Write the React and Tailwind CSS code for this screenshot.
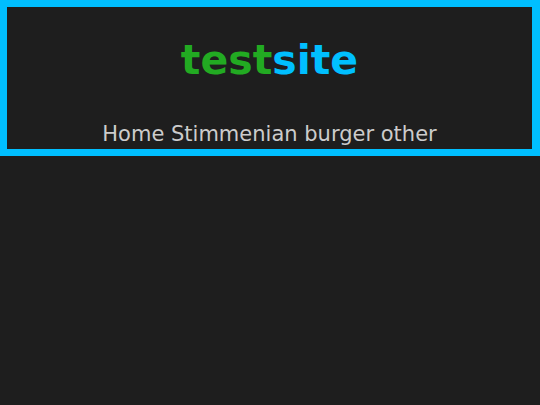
export default function App() {
  return (
    <div className="min-h-[405px] bg-[#1e1e1e]" style={{ fontFamily: '"DejaVu Sans", Verdana, sans-serif' }}>
      <header className="border-[7px] border-r-8 border-[#00bfff] bg-[#1e1e1e] text-center">
        <h1 className="pt-[29px] text-[41px] font-bold leading-[48px]">
          <span className="text-[#22aa22]">test</span>
          <span className="text-[#00bfff]">site</span>
        </h1>
        <nav className="pt-[38px] pb-[2px] text-[21px] leading-[25px] text-[#cccccc]">
          <a>Home</a> <a>Stimmenian</a> <a>burger</a> <a>other</a>
        </nav>
      </header>
    </div>
  );
}
